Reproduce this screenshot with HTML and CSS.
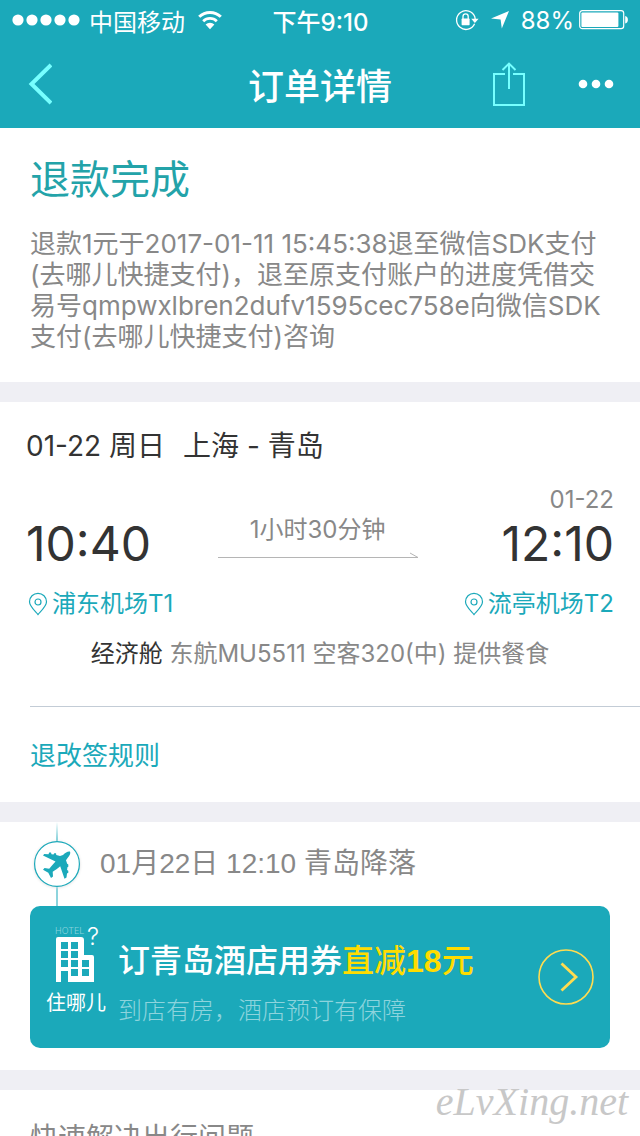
FILE: index.html
```html
<!DOCTYPE html>
<html lang="zh-CN">
<head>
<meta charset="utf-8">
<meta name="viewport" content="width=device-width, initial-scale=1">
<title>订单详情</title>
<link rel="stylesheet" href="styles.css">
</head>
<body>
<div class="screen">
  <header class="header">
    <div class="status">
      <div class="status-side">
        <svg class="signal" viewBox="0 0 68 12" width="68" height="12" fill="#fff" aria-hidden="true"><circle cx="6" cy="6" r="5.6"/><circle cx="20" cy="6" r="5.6"/><circle cx="34" cy="6" r="5.6"/><circle cx="48" cy="6" r="5.6"/><circle cx="62" cy="6" r="5.6"/></svg>
        <span class="carrier">中国移动</span>
        <svg class="wifi" viewBox="0 0 26 20" width="26" height="20" aria-hidden="true"><path d="M2.2 6.8a15.4 15.4 0 0 1 21.6 0" fill="none" stroke="#fff" stroke-width="3"/><path d="M6.2 11.2a9.8 9.8 0 0 1 13.6 0" fill="none" stroke="#fff" stroke-width="2.8"/><path d="M13 19.2l-4.4-4.6a6.4 6.4 0 0 1 8.8 0z" fill="#fff"/></svg>
      </div>
      <time class="clock">下午9:10</time>
      <div class="status-side status-right">
        <svg viewBox="0 0 24 22" width="24" height="22" aria-hidden="true"><path d="M19.6 14.800a9.400 9.400 0 1 1 .2-7l.4 2.400" fill="none" stroke="#fff" stroke-width="1.3"/><path d="M16.2 9.800h7.400l-3.700 4.200z" fill="#fff"/><rect x="6.600" y="9.600" width="8" height="6.600" rx=".6" fill="#fff"/><path d="M8 10V7.500a2.600 2.600 0 0 1 5.200 0V10" fill="none" stroke="#fff" stroke-width="1.300"/></svg>
        <svg class="locate" viewBox="0 0 20 20" width="20" height="20" aria-hidden="true"><path d="M19 1L11.800 18.600 10.600 9.400 1 8.600z" fill="#fff"/></svg>
        <span class="percent">88%</span>
        <svg viewBox="0 0 50 20" width="50" height="20" aria-hidden="true"><rect x=".7" y=".7" width="44" height="18" rx="2.600" fill="none" stroke="#fff" stroke-width="1.200"/><rect x="2.400" y="2.400" width="37" height="14.600" rx="1" fill="#fff"/><path d="M46.200 6c3.600.6 3.600 7 0 7.600z" fill="#fff"/></svg>
      </div>
    </div>
    <nav class="nav">
      <div class="nav-side">
        <button class="icon-button" type="button" aria-label="返回"><svg viewBox="0 0 26 44" width="26" height="44"><path d="M25 3L5.500 22 25 41" fill="none" stroke="#77ffff" stroke-width="4"/></svg></button>
      </div>
      <h1 class="nav-title">订单详情</h1>
      <div class="nav-side nav-actions">
        <button class="icon-button" type="button" aria-label="分享"><svg viewBox="0 0 34 44" width="34" height="44" fill="none" stroke="#77ffff" stroke-width="2"><path d="M13 12H2v31h30V12H21"/><path d="M17 27V2M10.500 8L17 1.600 23.500 8"/></svg></button>
        <button class="icon-button" type="button" aria-label="更多"><svg viewBox="0 0 36 10" width="36" height="10" fill="#fff"><circle cx="5" cy="5" r="4.300"/><circle cx="18" cy="5" r="4.300"/><circle cx="31" cy="5" r="4.300"/></svg></button>
      </div>
    </nav>
  </header>

  <main class="content">
    <section class="card refund">
      <h2 class="refund-title">退款完成</h2>
      <p class="refund-text">退款1元于2017-01-11 15:45:38退至微信SDK支付<br>(去哪儿快捷支付)，退至原支付账户的进度凭借交<br>易号qmpwxlbren2dufv1595cec758e向微信SDK<br>支付(去哪儿快捷支付)咨询</p>
    </section>

    <section class="card flight">
      <div class="flight-body">
        <h2 class="flight-title"><span>01-22 周日</span><span>上海 - 青岛</span></h2>
        <div class="route">
          <div class="stop">
            <time class="stop-time">10:40</time>
            <a class="airport" href="#"><svg viewBox="0 0 20 24" width="20" height="24" fill="none" stroke="#1ba9ba" stroke-width="1.200"><path d="M10 22.500C6.800 18.800 1.500 14.300 1.500 9.800a8.500 8.500 0 0 1 17 0c0 4.500-5.300 9-8.500 12.700z"/><circle cx="10" cy="10" r="3"/></svg>浦东机场T1</a>
          </div>
          <div class="duration">
            <span>1小时30分钟</span>
            <svg viewBox="0 0 200 6" width="200" height="6" fill="none" stroke="#b5b5b5" aria-hidden="true"><path d="M0 5.500H200L192 1"/></svg>
          </div>
          <div class="stop stop-end">
            <span class="stop-date">01-22</span>
            <time class="stop-time">12:10</time>
            <a class="airport" href="#"><svg viewBox="0 0 20 24" width="20" height="24" fill="none" stroke="#1ba9ba" stroke-width="1.200"><path d="M10 22.500C6.800 18.800 1.500 14.300 1.500 9.800a8.500 8.500 0 0 1 17 0c0 4.500-5.300 9-8.500 12.700z"/><circle cx="10" cy="10" r="3"/></svg>流亭机场T2</a>
          </div>
        </div>
        <p class="plane-info"><span class="cabin">经济舱</span> 东航MU5511 空客320(中) 提供餐食</p>
      </div>
      <a class="rules" href="#">退改签规则</a>
    </section>

    <section class="card landing">
      <div class="landing-head">
        <svg class="landing-mark" viewBox="0 0 54 84" width="54" height="84" aria-hidden="true">
          <defs><linearGradient id="fade" x1="0" y1="0" x2="0" y2="1"><stop offset="0" stop-color="#1ba9ba" stop-opacity="0"/><stop offset="1" stop-color="#1ba9ba" stop-opacity=".6"/></linearGradient><filter id="shade" x="-20%" y="-20%" width="140%" height="140%"><feGaussianBlur stdDeviation="1.500"/></filter></defs>
          <rect x="26" y="0" width="2" height="20" fill="url(#fade)"/><rect x="26" y="64" width="2" height="20" fill="#8dd4dd"/>
          <circle cx="27" cy="42.500" r="23" fill="#ddd" filter="url(#shade)"/>
          <circle cx="27" cy="42" r="22.400" fill="#fff" stroke="#1ba9ba" stroke-width="1.200"/>
          <path fill="#1ba9ba" d="M40 29.600C38 29 35.500 30.500 33 33L30 34 26.300 33 26 31.300H24.200L23.500 32.600 21.500 32.200 21 30.600H19.200L18.500 32.200 14.200 32 13 33.500 25.500 39.500C23.300 42 21 44.500 19.200 46.800L14.500 46 13 47.800 18.300 50.800 21 56 23 54.500 22.700 49.800C25 48.200 28 46 30.200 44.200L34.500 56.800 36.500 55.500 37 51.500 38.300 50.800V48.800L37.100 48 37.400 45.300 38.300 44.700V42.500L37.200 41.800 36 38.200 37.200 36.500C39.500 34 41 31.500 40 29.600z"/>
        </svg>
        <h2 class="landing-title">01月22日 12:10 青岛降落</h2>
      </div>
      <a class="hotel" href="#">
        <span class="hotel-logo">
          <svg viewBox="0 0 60 58" width="60" height="58" aria-hidden="true">
            <text class="logo-word" x="9" y="10">HOTEL</text>
            <text class="logo-mark" x="41" y="21">?</text>
            <path fill="#fff" fill-rule="evenodd" d="M12 13H35q3 0 3 3V31H46q2 0 2 2V58H22V47H15V58H10V15q0-2 2-2zM15 18v7h7v-7zM25 18v7h7v-7zM15 27v7h7v-7zM25 27v7h7v-7zM15 36v7h7v-7zM25 36v7h7v-7zM36 36v7h7v-7zM25 45v7h7v-7zM36 45v7h7v-7z"/>
          </svg>
          <span>住哪儿</span>
        </span>
        <span class="hotel-copy">
          <strong class="hotel-title">订青岛酒店用券<em>直减<b>18</b>元</em></strong>
          <span class="hotel-sub">到店有房，酒店预订有保障</span>
        </span>
        <svg class="hotel-go" viewBox="0 0 56 56" width="56" height="56" fill="none" aria-hidden="true"><circle cx="28" cy="28" r="27" stroke="#ffdc50" stroke-width="1.600"/><path d="M23.500 14.500L38 28 23.500 41.500" stroke="#ffdc50" stroke-width="2.800"/></svg>
      </a>
    </section>

    <section class="card help">
      <h2 class="help-title">快速解决出行问题</h2>
    </section>
  </main>
  <span class="watermark">eLvXing.net</span>
</div>
</body>
</html>
```

FILE: styles.css
```css
* { box-sizing: border-box; }

body {
  margin: 0;
  background: #efeff4;
  color: #333;
  font-family: Inter, "Noto Sans CJK SC", sans-serif;
  font-weight: 400;
}

h1, h2, p { margin: 0; font-weight: inherit; }
a { color: #1ba9ba; text-decoration: none; }
svg { display: block; flex: none; }

.screen { position: relative; height: 100vh; overflow: hidden; }

.header { background: #1ba9ba; color: #fff; }

.status {
  display: flex;
  align-items: center;
  height: 40px;
  padding: 0 11px 0 12px;
  font-size: 24px;
  white-space: nowrap;
}
.status-side { display: flex; flex: 1; align-items: center; }
.status-right { justify-content: flex-end; }
.carrier { margin: 0 12px 0 9px; }
.clock { font-weight: 500; }
.locate { margin: 0 11px; }
.percent { margin-right: 5px; }

.nav { display: flex; align-items: center; height: 88px; padding: 0 26px; }
.nav-side { display: flex; flex: 1; align-items: center; }
.nav-actions { justify-content: flex-end; gap: 52px; }
.nav-title { font-size: 36px; font-weight: 500; }
.icon-button { padding: 0; border: 0; background: none; cursor: pointer; }

.content { display: flex; flex-direction: column; gap: 20px; }
.card { background: #fff; }

.refund { padding: 22px 30px 30px; }
.refund-title { color: #23a3a9; font-size: 40px; line-height: 60px; }
.refund-text {
  margin-top: 18px;
  color: #888;
  font-size: 26px;
  line-height: 31px;
  white-space: nowrap;
}

.flight { padding-left: 26px; }
.flight-body { padding: 24px 26px 34px 0; }
.flight-title { display: flex; gap: 18px; font-size: 28px; line-height: 40px; }
.route { display: flex; align-items: flex-end; justify-content: space-between; margin-top: 16px; }
.stop { display: flex; flex-direction: column; align-items: flex-start; }
.stop-end { align-items: flex-end; }
.stop-date { color: #888; font-size: 24px; line-height: 36px; }
.stop-time { font-size: 48px; line-height: 52px; }
.airport { display: flex; align-items: center; gap: 4px; margin-top: 16px; padding-left: 2px; font-size: 24px; line-height: 36px; }
.duration { display: flex; flex-direction: column; align-items: center; gap: 4px; margin-bottom: 64px; color: #888; font-size: 24px; line-height: 36px; }
.plane-info { margin-top: 14px; color: #888; font-size: 24px; line-height: 36px; text-align: center; white-space: nowrap; }
.cabin { color: #333; }
.rules { display: block; margin-left: 4px; padding: 29px 0 26px; border-top: 1px solid #c3ccd6; font-size: 26px; line-height: 40px; }

.landing { padding: 0 30px 22px; }
.landing-head { display: flex; align-items: center; gap: 16px; }
.landing-title { color: #888; font-family: "Liberation Sans", "Noto Sans CJK SC", sans-serif; font-size: 28px; line-height: 40px; }
.hotel {
  display: flex;
  align-items: center;
  padding: 18px 16px;
  border-radius: 10px;
  background: #1ba9ba;
  color: #fff;
}
.hotel-logo { display: flex; flex-direction: column; align-items: center; gap: 6px; padding-bottom: 12px; font-size: 20px; line-height: 30px; }
.logo-word { fill: #8dd4dd; font-size: 9px; font-weight: 300; }
.logo-mark { fill: #fff; font-size: 24px; font-weight: 300; }
.hotel-copy { display: flex; flex: 1; flex-direction: column; gap: 8px; padding: 12px 0 0 12px; white-space: nowrap; }
.hotel-title { font-family: "Liberation Sans", "Noto Sans CJK SC", sans-serif; font-size: 32px; font-weight: 500; line-height: 48px; }
.hotel-title em { color: #ffdc00; font-style: normal; }
.hotel-title b { font-weight: 700; }
.hotel-sub { color: #8dd4dd; font-size: 24px; font-weight: 300; line-height: 36px; }

.help { padding: 26px 30px; }
.help-title { color: #888; font-size: 28px; line-height: 44px; }

.watermark {
  position: absolute;
  right: 12px;
  bottom: 12px;
  color: #c8c8c8;
  font-family: "Brush Script MT", "Liberation Serif", cursive;
  font-size: 40px;
  font-style: italic;
  line-height: 44px;
}
```
